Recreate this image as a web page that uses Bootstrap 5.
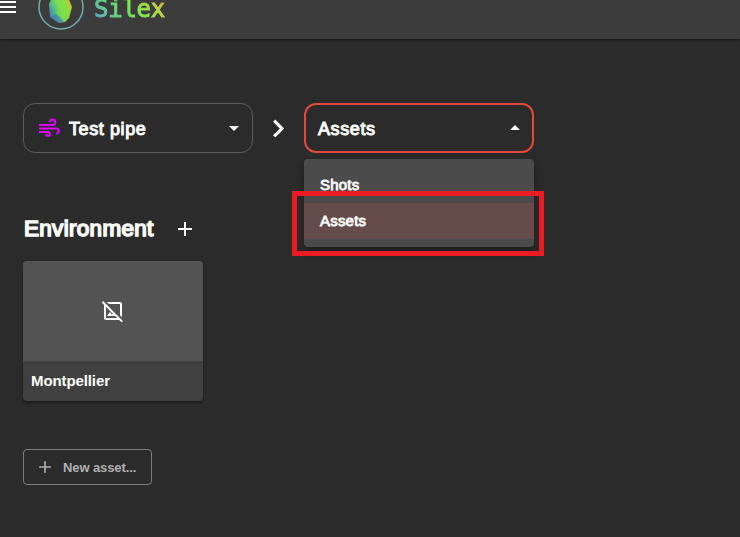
<!DOCTYPE html>
<html lang="en">
<head>
<meta charset="utf-8">
<meta name="viewport" content="width=device-width, initial-scale=1">
<title>Silex</title>
<link href="https://cdn.jsdelivr.net/npm/bootstrap@5.3.0/dist/css/bootstrap.min.css" rel="stylesheet">
<style>
body{background:#2b2b2b;color:#fff;font-family:"Liberation Sans",Arial,sans-serif;height:537px;overflow:hidden}
svg{display:block;flex:none}
.topbar{height:39px;background:#3c3c3c;box-shadow:0 1px 2px #151515;overflow:hidden}
.topbar .menu{margin:-5px 0 0 -5px}
.topbar .logo{margin:-16px 0 0 19px}
.brand{font:24px/28px "DejaVu Sans Mono",monospace;letter-spacing:-.25px;margin:-5px 0 0 10px;background:linear-gradient(50deg,#4a86c8 0%,#5fb8b0 14%,#62d67c 32%,#7de84c 56%,#b8d840 80%,#e08a40 100%);-webkit-background-clip:text;background-clip:text;color:transparent;-webkit-text-stroke:1px transparent}
main{padding:64px 23px 0}
.picker{width:230px;height:50px;border:1px solid #5c5c5c;border-radius:12px;font-size:18px;padding:0 6px 0 14px;letter-spacing:.6px;-webkit-text-stroke:1px #fff}
.picker span{padding-top:2px}
.picker .label{margin-left:7px}
.picker.open{border:2px solid #e2493f;padding:0 5px 0 12px}
.options{left:0;top:56px;width:230px;height:88px;padding:8px 0;background:#4b4b4b;border-radius:4px;box-shadow:0 5px 8px #0005;font-size:15px;letter-spacing:.2px;-webkit-text-stroke:.8px #fff}
.options div{height:36px;line-height:36px;padding-left:16px}
.options .chosen{background:#654c4a}
.marker{left:-12px;top:88px;width:252px;height:65px;border:5px solid #ed1c24}
.group{margin-top:62px}
.group-title{font-size:22.5px;line-height:28px;font-weight:400;-webkit-text-stroke:1.6px #fff;letter-spacing:.3px;width:150px;padding-left:1px}
.tile{width:180px;height:140px;background:#404040;border-radius:4px;overflow:hidden;box-shadow:0 2px 3px #0005;margin-top:18px}
.thumb{height:100px;background:#535353}
.caption{font-size:15px;font-weight:700;line-height:40px;padding-left:8px;letter-spacing:-.1px}
.new-asset{width:129px;height:36px;margin-top:48px;border:1px solid #7c7c7c;border-radius:4px;color:#b0b0b0;font-size:13px;font-weight:700;padding:0 0 0 11px;letter-spacing:-.1px}
.new-asset span{padding-top:1px}
</style>
</head>
<body>
<header class="topbar d-flex align-items-start">
<svg class="menu" width="24" height="24" fill="#fff"><path d="M3 6h18v2H3zM3 11h18v2H3zM3 16h18v2H3z"/></svg>
<svg class="logo" width="46" height="46" viewBox="0 0 46 46"><defs><linearGradient id="gem" x1="0" y1=".9" x2="1" y2=".3"><stop stop-color="#4668c0"/><stop offset=".3" stop-color="#50b890"/><stop offset=".5" stop-color="#78dc50"/><stop offset=".8" stop-color="#96de40"/><stop offset="1" stop-color="#dca83c"/></linearGradient></defs><circle cx="23" cy="23" r="22" fill="none" stroke="#71abae" stroke-width="1.5"/><path d="M16 9l13 1 5 13-3 11-4 4-6 1-9-6-1-13z" fill="url(#gem)"/><path d="M12 33l6-3 8 8-5 1z" fill="#4a70b8" opacity=".55"/><path d="M18 29l6-18 8 18-6 7z" fill="#7ee04a" opacity=".5"/></svg>
<div class="brand">Silex</div>
</header>
<main>
<div class="d-flex align-items-center">
<div class="picker d-flex align-items-center"><svg width="24" height="24" fill="none" stroke="#e000ff" stroke-width="2"><path d="M1 9h13.5a2.8 2.8 0 1 0-2.8-2.8M14.5 9h1M1 12.5h17.3a2.3 2.3 0 1 1 0 4.9M1 16h9a1.9 1.9 0 1 1-1.9 1.9"/></svg><span class="label">Test pipe</span><svg class="ms-auto" width="24" height="24" fill="#fff"><path d="M7 10l5 5 5-5z"/></svg></div>
<svg class="mx-3" width="19" height="24" fill="none" stroke="#fff" stroke-width="3.2"><path d="M5.2 4.7l7.7 7.8-7.7 7.8"/></svg>
<div class="position-relative">
<div class="picker open d-flex align-items-center"><span>Assets</span><svg class="ms-auto" width="24" height="24" fill="#fff"><path d="M7 14l5-5 5 5z"/></svg></div>
<div class="options position-absolute"><div>Shots</div><div class="chosen">Assets</div></div>
<div class="marker position-absolute"></div>
</div>
</div>
<div class="group d-flex align-items-center"><h2 class="group-title m-0">Environment</h2><svg width="24" height="24" fill="#fff"><path d="M19 13h-6v6h-2v-6H5v-2h6V5h2v6h6z"/></svg></div>
<div class="tile"><div class="thumb d-flex align-items-center justify-content-center"><svg width="24" height="24" fill="#fff"><path d="M21.9 21.9l-8.49-8.49-9.82-9.82L2.1 2.1.69 3.51 3 5.83V19c0 1.1.9 2 2 2h13.17l2.31 2.31 1.42-1.41zM5 19V7.83l6.84 6.84-.84 1.05L9 13l-3 4h8.17l2 2H5zM7.83 5l-2-2H19c1.1 0 2 .9 2 2v13.17l-2-2V5H7.83z"/></svg></div><div class="caption">Montpellier</div></div>
<button class="new-asset bg-transparent d-flex align-items-center"><svg width="20" height="20" viewBox="0 0 24 24" fill="#b0b0b0"><path d="M19 13h-6v6h-2v-6H5v-2h6V5h2v6h6z"/></svg><span class="ms-2">New asset...</span></button>
</main>
</body>
</html>
